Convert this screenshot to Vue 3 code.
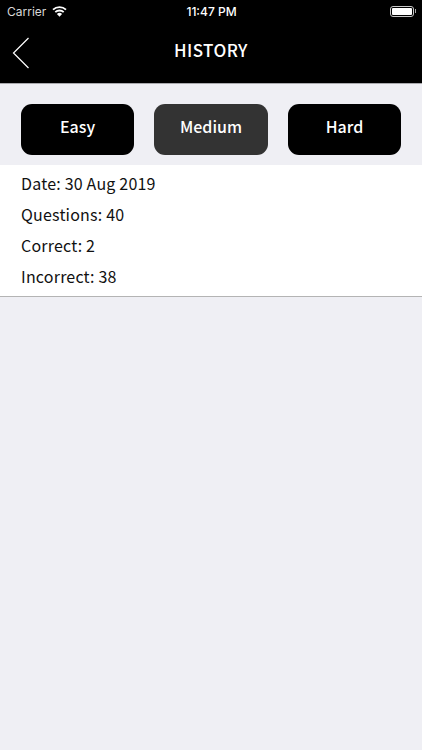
<script setup>
const levels = [
  { name: 'Easy', active: false },
  { name: 'Medium', active: true },
  { name: 'Hard', active: false }
]
const rows = ['Date: 30 Aug 2019', 'Questions: 40', 'Correct: 2', 'Incorrect: 38']
</script>

<template>
  <div class="page">
    <header class="top">
      <div class="status">
        <div class="status-left">
          <span class="carrier">Carrier</span>
          <svg class="wifi" width="15" height="11" viewBox="0 0 15 11">
            <path d="M7.5 10.8 L4.9 7.9 A3.8 3.8 0 0 1 10.1 7.9 Z" fill="#fff" />
            <path d="M3.3 6.2 A6 6 0 0 1 11.7 6.2" fill="none" stroke="#fff" stroke-width="1.8" />
            <path d="M1 3.6 A9.5 9.5 0 0 1 14 3.6" fill="none" stroke="#fff" stroke-width="1.8" />
          </svg>
        </div>
        <span class="time">11:47 PM</span>
        <div class="status-right">
          <div class="battery"><div class="charge"></div></div>
          <div class="nub"></div>
        </div>
      </div>
      <div class="nav">
        <svg class="back" width="18" height="32" viewBox="0 0 18 32">
          <path d="M16.5 1 L1.5 16 L16.5 31" fill="none" stroke="#fff" stroke-width="1.2" />
        </svg>
        <h1>HISTORY</h1>
      </div>
    </header>

    <div class="levels">
      <button v-for="l in levels" :key="l.name" class="level" :class="{ active: l.active }">{{ l.name }}</button>
    </div>

    <div class="card">
      <p v-for="r in rows" :key="r">{{ r }}</p>
    </div>
  </div>
</template>

<style scoped>
.page {
  height: 750px;
  background: #efeff4;
  font-family: "Noto Sans CJK KR", "Noto Sans", sans-serif;
  overflow: hidden;
}
.top {
  height: 84px;
  box-sizing: border-box;
  background: #000;
  color: #fff;
  border-bottom: 1px solid #a9a9ad;
}
.status {
  height: 22px;
  display: grid;
  grid-template-columns: 1fr auto 1fr;
  align-items: center;
  padding: 0 6px 0 7px;
  font-family: "Inter", "Liberation Sans", sans-serif;
  font-size: 12px;
}
.status-left {
  display: flex;
  align-items: center;
  gap: 6px;
}
.carrier {
  color: #d8d8d8;
}
.time {
  font-weight: 500;
}
.status-right {
  display: flex;
  align-items: center;
  justify-content: flex-end;
}
.battery {
  width: 24px;
  height: 11px;
  box-sizing: border-box;
  border: 1px solid #c8c8c8;
  border-radius: 3px;
  padding: 1px;
}
.charge {
  height: 100%;
  background: #fff;
  border-radius: 1px;
}
.nub {
  width: 1px;
  height: 4px;
  margin-left: 1px;
  background: #aaa;
}
.nav {
  height: 55px;
  display: flex;
  align-items: center;
  justify-content: center;
  position: relative;
}
.back {
  position: absolute;
  left: 12px;
  top: 15px;
}
h1 {
  margin: 0;
  font-size: 17px;
  font-weight: 500;
  letter-spacing: 0.4px;
}
.levels {
  display: grid;
  grid-template-columns: 113px 114px 113px;
  justify-content: space-between;
  padding: 20px 21px 10px;
}
.level {
  height: 51px;
  padding: 0 0 7px;
  border: none;
  border-radius: 11px;
  background: #000;
  color: #fff;
  font-family: inherit;
  font-size: 16px;
  font-weight: 500;
  letter-spacing: 0;
}
.level.active {
  background: #333;
}
.card {
  background: #fff;
  border-bottom: 1px solid #b4b4b4;
  padding: 3px 21px 4px;
}
.card p {
  margin: 0;
  height: 31px;
  line-height: 31px;
  font-size: 16px;
  letter-spacing: 0.2px;
  color: #111;
}
</style>
